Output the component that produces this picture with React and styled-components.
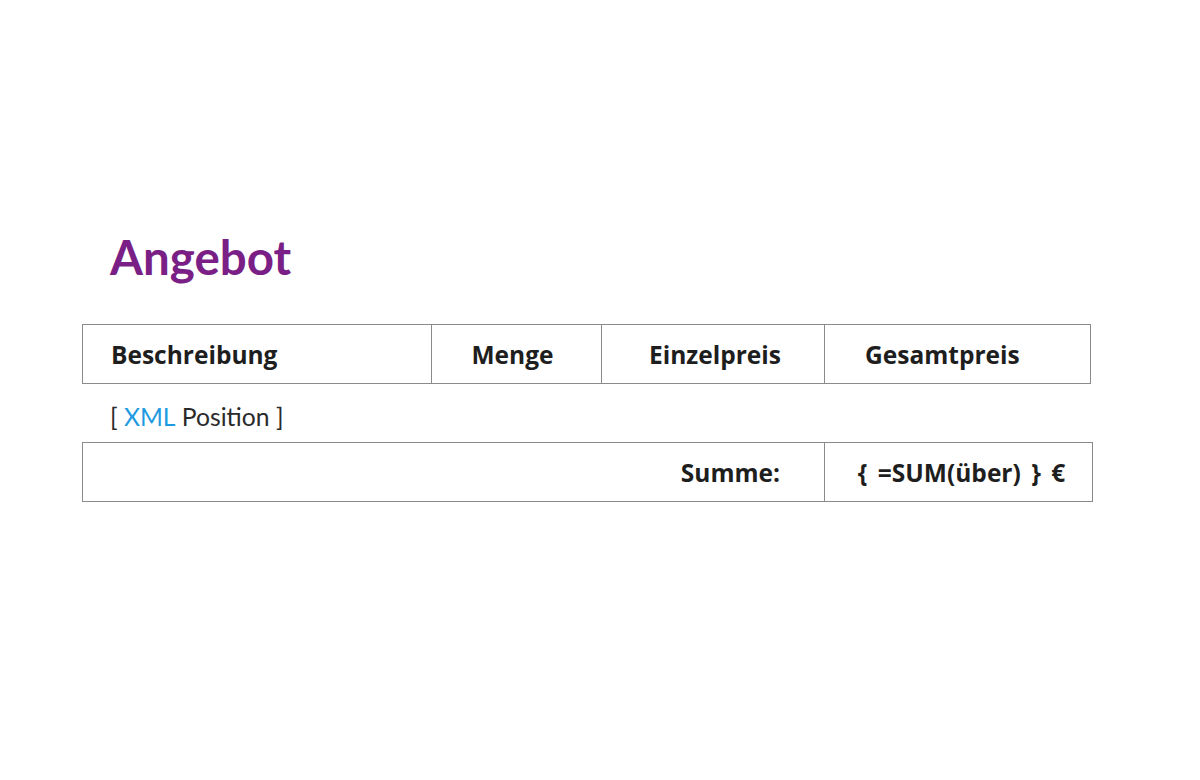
import React from 'react'
import styled, { createGlobalStyle } from 'styled-components'

const GlobalStyle = createGlobalStyle`
  body {
    margin: 0;
    background: #fff;
    font-family: Lato, "Open Sans", sans-serif;
    color: #1e1e1e;
  }
`

const Page = styled.div`
  width: 1200px;
  height: 780px;
  padding: 226px 0 0 82px;
  box-sizing: border-box;
`

const Title = styled.h1`
  margin: 0 0 36px 28px;
  font-size: 47.5px;
  font-weight: 700;
  line-height: 62px;
  color: #7a1f86;
`

const Table = styled.div`
  display: grid;
  grid-template-columns: ${p => p.cols};
  width: ${p => p.width}px;
  height: 60px;
  box-sizing: border-box;
  border: 1px solid #8a8a8a;
`

const Cell = styled.div`
  display: flex;
  align-items: center;
  justify-content: ${p => p.align || 'flex-start'};
  padding: ${p => p.pad || '0'};
  font-family: "Open Sans", Lato, sans-serif;
  font-size: 24.5px;
  font-weight: 700;
  word-spacing: ${p => p.wide ? '4px' : '0'};
  border-left: ${p => (p.first ? 'none' : '1px solid #8a8a8a')};
  white-space: nowrap;
`

const Placeholder = styled.div`
  height: 58px;
  display: flex;
  align-items: center;
  padding: 6px 0 0 28px;
  box-sizing: border-box;
  font-size: 24.7px;
  font-weight: 400;
  color: #2a2a2a;
`

const Xml = styled.span`
  color: #1e9be0;
`

export default function App() {
  return (
    <Page>
      <GlobalStyle />
      <Title>Angebot</Title>
      <Table width={1009} cols="348px 170px 223px 1fr">
        <Cell first pad="0 0 0 28px">Beschreibung</Cell>
        <Cell align="center" pad="0 8px 0 0">Menge</Cell>
        <Cell align="center" pad="0 0 0 4px">Einzelpreis</Cell>
        <Cell pad="0 0 0 40px">Gesamtpreis</Cell>
      </Table>
      <Placeholder>
        [&nbsp;<Xml>XML</Xml>&nbsp;Position ]
      </Placeholder>
      <Table width={1011} cols="741px 1fr">
        <Cell first align="flex-end" pad="0 44px 0 0">Summe:</Cell>
        <Cell wide align="center" pad="0 0 0 6px">{'{ =SUM(über) } €'}</Cell>
      </Table>
    </Page>
  )
}
